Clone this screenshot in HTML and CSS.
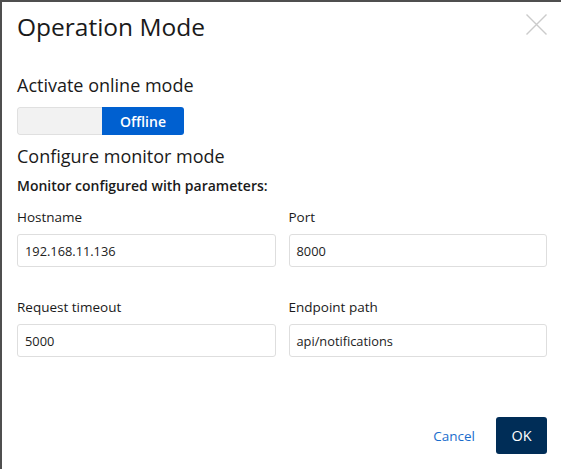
FILE: index.html
```html
<!DOCTYPE html>
<html lang="en">
<head>
<meta charset="utf-8">
<title>Operation Mode</title>
<link rel="stylesheet" href="styles.css">
</head>
<body>
<div class="dialog">
  <div class="header">
    <h1 class="title">Operation Mode</h1>
    <button class="close" aria-label="Close">
      <svg width="21" height="21" viewBox="0 0 21 21"><path d="M0.5 0.5 L20.5 20.5 M20.5 0.5 L0.5 20.5" stroke="#cbcbcb" stroke-width="1.4" fill="none"/></svg>
    </button>
  </div>
  <h2 class="section">Activate online mode</h2>
  <div class="toggle">
    <span class="toggle-off"></span>
    <span class="toggle-on">Offline</span>
  </div>
  <h2 class="section section-2">Configure monitor mode</h2>
  <p class="subtitle">Monitor configured with parameters:</p>
  <div class="grid">
    <div class="field">
      <label class="label">Hostname</label>
      <div class="input">192.168.11.136</div>
    </div>
    <div class="field">
      <label class="label">Port</label>
      <div class="input">8000</div>
    </div>
    <div class="field">
      <label class="label">Request timeout</label>
      <div class="input">5000</div>
    </div>
    <div class="field">
      <label class="label">Endpoint path</label>
      <div class="input">api/notifications</div>
    </div>
  </div>
  <div class="footer">
    <a class="cancel" href="#">Cancel</a>
    <button class="ok">OK</button>
  </div>
</div>
</body>
</html>
```

FILE: styles.css
```css
* { box-sizing: border-box; }
html, body { margin: 0; padding: 0; background: #fff; }
body { font-family: "Open Sans", "Noto Sans", sans-serif; color: #1a1a1a; }
.dialog {
  width: 561px;
  height: 469px;
  border-top: 2px solid #4f4f4f;
  border-left: 2px solid #4f4f4f;
  padding: 0 14px 0 15px;
  display: flex;
  flex-direction: column;
}
.header {
  display: flex;
  justify-content: space-between;
  align-items: flex-start;
  height: 50px;
}
.title {
  margin: 9px 0 0 0;
  font-size: 24.5px;
  font-weight: 400;
  line-height: 32px;
}
.close {
  margin: 12px 0 0 0;
  padding: 0;
  border: 0;
  background: none;
  width: 21px;
  height: 21px;
}
.close svg { display: block; }
.section {
  margin: 21px 0 0 0;
  font-size: 18px;
  font-weight: 400;
  line-height: 24px;
}
.section-2 { margin-top: 9px; }
.toggle {
  margin-top: 10px;
  width: 167px;
  height: 28px;
  display: flex;
  border-radius: 3px;
  overflow: hidden;
}
.toggle-off {
  width: 85px;
  background: #f2f2f2;
  border: 1px solid #e0e0e0;
  border-right: 0;
  border-radius: 3px 0 0 3px;
}
.toggle-on {
  flex: 1;
  background: #0060d0;
  color: #fff;
  font-size: 14px;
  font-weight: 600;
  display: flex;
  align-items: center;
  justify-content: center;
}
.subtitle {
  margin: 8px 0 0 0;
  font-size: 14px;
  font-weight: 600;
  line-height: 20px;
}
.grid {
  margin-top: 11px;
  display: grid;
  grid-template-columns: 1fr 1fr;
  column-gap: 13px;
  row-gap: 30px;
}
.field { display: flex; flex-direction: column; }
.label {
  font-size: 13.5px;
  line-height: 20px;
  margin-bottom: 7px;
}
.input {
  height: 33px;
  border: 1px solid #dedede;
  border-radius: 3px;
  padding: 0 8px 0 7px;
  font-size: 12.8px;
  display: flex;
  align-items: center;
  color: #222;
}
.footer {
  margin-top: auto;
  margin-bottom: 15px;
  display: flex;
  justify-content: flex-end;
  align-items: center;
  gap: 21px;
}
.cancel {
  color: #1a6dcc;
  text-decoration: none;
  font-size: 13.5px;
}
.ok {
  width: 51px;
  height: 37px;
  border: 0;
  border-radius: 3px;
  background: #002d57;
  color: #fff;
  font-family: inherit;
  font-size: 14.5px;
}
```
